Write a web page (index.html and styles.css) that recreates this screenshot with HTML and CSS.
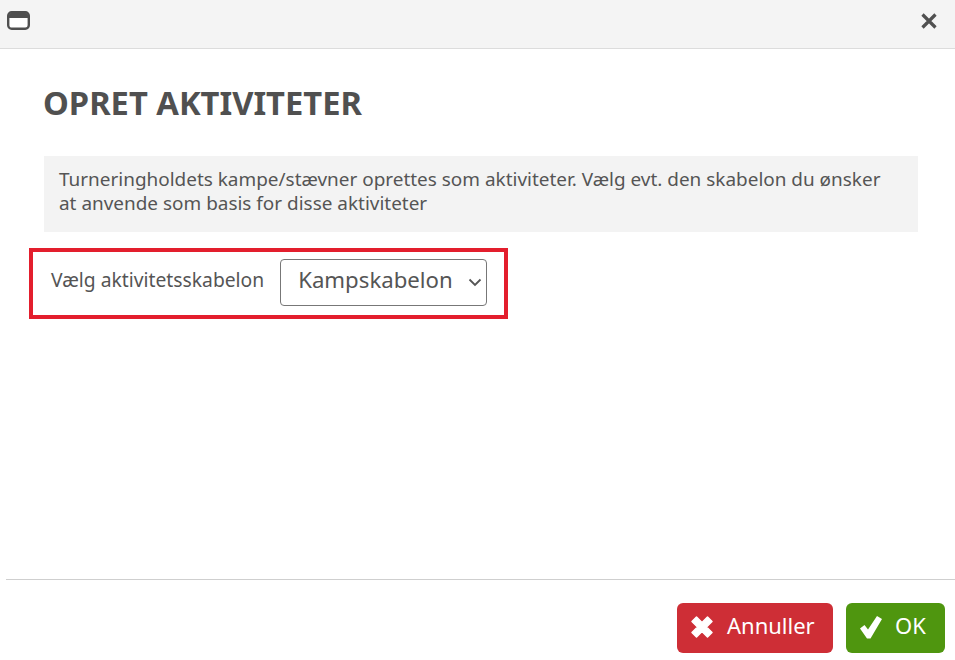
FILE: index.html
```html
<!DOCTYPE html>
<html lang="en">
<head>
    <meta charset="UTF-8">
    <title>Opret aktiviteter</title>
    <link rel="stylesheet" href="styles.css">
</head>
<body>
    <div class="dialog">
        <div class="dialog-bar">
            <svg class="window-icon" width="23" height="19" viewBox="0 0 23 19">
                <rect x="1.200" y="1.200" width="20.600" height="16.600" rx="3.500" fill="#fff" stroke="#4f4f4f" stroke-width="2.400"/>
                <path d="M2 7V4.500A2.500 2.500 0 0 1 4.500 2h14A2.500 2.500 0 0 1 21 4.500V7z" fill="#4f4f4f"/>
            </svg>
            <svg class="close-icon" width="18" height="18" viewBox="0 0 18 18">
                <path d="M2.500 2.500l13 13M15.500 2.500l-13 13" stroke="#505050" stroke-width="3.200" fill="none"/>
            </svg>
        </div>
        <div class="dialog-body">
            <h1>OPRET AKTIVITETER</h1>
            <p class="info-box">Turneringholdets kampe/stævner oprettes som aktiviteter. Vælg evt. den skabelon du ønsker at anvende som basis for disse aktiviteter</p>
            <div class="template-row">
                <label>Vælg aktivitetsskabelon</label>
                <div class="select-box">
                    <span>Kampskabelon</span>
                    <svg width="14" height="9" viewBox="0 0 14 9">
                        <path d="M1.500 1.500l5.500 5.500 5.500-5.500" stroke="#555" stroke-width="1.800" fill="none"/>
                    </svg>
                </div>
            </div>
        </div>
        <div class="dialog-footer">
            <button class="btn btn-cancel">
                <svg width="24" height="24" viewBox="0 0 24 24">
                    <path d="M2 6.500L6.500 2 12 7.500 17.500 2 22 6.500 16.500 12 22 17.500 17.500 22 12 16.500 6.500 22 2 17.500 7.500 12z" fill="#fff" stroke="#fff" stroke-width="1.500" stroke-linejoin="round"/>
                </svg>
                <span>Annuller</span>
            </button>
            <button class="btn btn-ok">
                <svg width="24" height="24" viewBox="0 0 24 24">
                    <path d="M1 13.500l4.500-3.500 3.500 4.500L18 1l5 3L11.500 23.500H8z" fill="#fff"/>
                </svg>
                <span>OK</span>
            </button>
        </div>
    </div>
</body>
</html>
```

FILE: styles.css
```css
html, body {
    margin: 0;
    padding: 0;
    background: white;
}

body {
    font-family: "Noto Sans", "Open Sans", sans-serif;
    color: #555;
}

.dialog {
    width: 955px;
    height: 660px;
    display: flex;
    flex-direction: column;
    overflow: hidden;
}

.dialog-bar {
    height: 49px;
    box-sizing: border-box;
    background: #f4f4f4;
    border-bottom: 1px solid #dcdcdc;
    display: flex;
    justify-content: space-between;
    align-items: center;
    padding: 0 17px 7px 7px;
}

.dialog-body {
    flex: 1;
    padding: 0 37px 0 29px;
}

h1 {
    font-size: 32.700px;
    font-weight: 700;
    line-height: 44px;
    margin: 32px 0 31px 14px;
    color: #505050;
}

.info-box {
    background: #f3f3f3;
    margin: 0 0 16px 15px;
    padding: 11px 30px 17px 15px;
    font-size: 18.950px;
    line-height: 24px;
}

.template-row {
    width: 479px;
    height: 71px;
    box-sizing: border-box;
    border: 4px solid #e31e2d;
    display: flex;
    align-items: center;
    padding: 0 17px 2px 18px;
    gap: 16px;
}

.template-row label {
    font-size: 19.300px;
    line-height: 24px;
    margin-bottom: 6px;
    white-space: nowrap;
}

.select-box {
    width: 207px;
    height: 47px;
    box-sizing: border-box;
    border: 1px solid #777;
    border-radius: 4px;
    display: flex;
    align-items: center;
    justify-content: space-between;
    padding: 0 4px 0 17px;
    font-size: 22.200px;
    flex-shrink: 0;
}

.select-box span {
    margin-bottom: 7px;
}

.dialog-footer {
    margin-left: 6px;
    border-top: 1px solid #cfcfcf;
    height: 81px;
    box-sizing: border-box;
    display: flex;
    justify-content: flex-end;
    align-items: flex-start;
    gap: 13px;
    padding: 23px 10px 0 0;
}

.btn {
    height: 50px;
    border: none;
    border-radius: 6px;
    color: white;
    font-family: inherit;
    font-size: 22px;
    display: flex;
    align-items: center;
    gap: 13px;
    padding: 0 0 0 13px;
}

.btn svg {
    margin-bottom: 3px;
}

.btn span {
    margin-bottom: 7px;
}

.btn-cancel {
    width: 156px;
    background: #ce2e36;
}

.btn-ok {
    width: 99px;
    background: #4f960f;
    gap: 12px;
}
```
